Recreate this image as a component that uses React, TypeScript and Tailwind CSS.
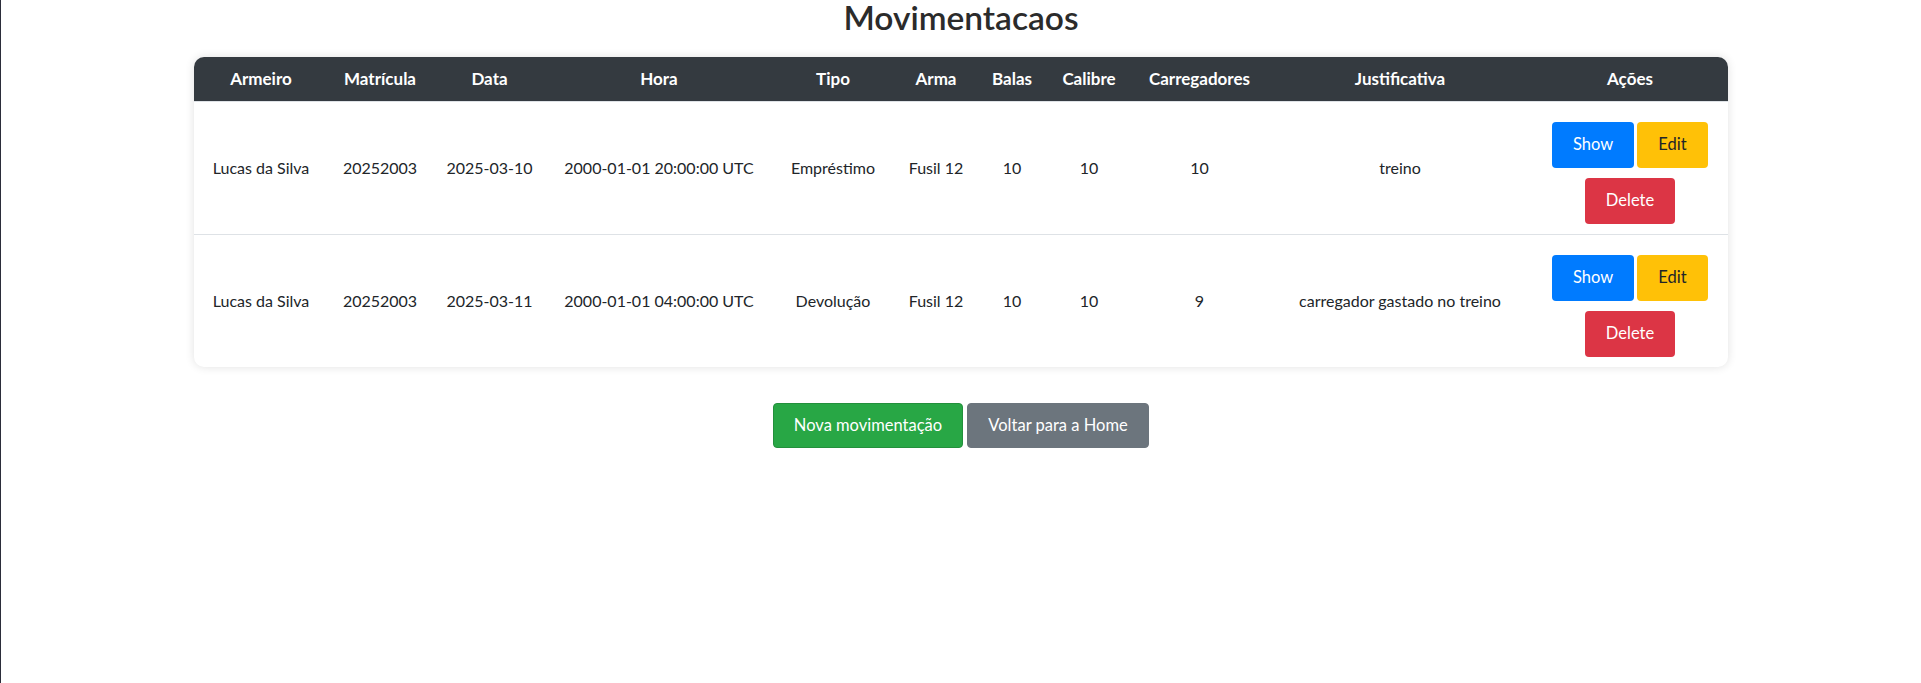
import React from "react";

type Row = {
  armeiro: string;
  matricula: string;
  data: string;
  hora: string;
  tipo: string;
  arma: string;
  balas: string;
  calibre: string;
  carregadores: string;
  justificativa: string;
};

const rows: Row[] = [
  {
    armeiro: "Lucas da Silva",
    matricula: "20252003",
    data: "2025-03-10",
    hora: "2000-01-01 20:00:00 UTC",
    tipo: "Empréstimo",
    arma: "Fusil 12",
    balas: "10",
    calibre: "10",
    carregadores: "10",
    justificativa: "treino",
  },
  {
    armeiro: "Lucas da Silva",
    matricula: "20252003",
    data: "2025-03-11",
    hora: "2000-01-01 04:00:00 UTC",
    tipo: "Devolução",
    arma: "Fusil 12",
    balas: "10",
    calibre: "10",
    carregadores: "9",
    justificativa: "carregador gastado no treino",
  },
];

const headers = [
  "Armeiro",
  "Matrícula",
  "Data",
  "Hora",
  "Tipo",
  "Arma",
  "Balas",
  "Calibre",
  "Carregadores",
  "Justificativa",
  "Ações",
];

const widths = [134, 104, 115, 224, 124, 82, 70, 84, 137, 264, 196];

export default function App() {
  return (
    <div className="min-h-[683px] bg-white border-l border-[#2b2d3a] font-['Lato',sans-serif] text-[#212529]">
      <h2 className="text-center text-[33.5px] font-semibold leading-[34px] m-0 text-[#2b2b2b]">Movimentacaos</h2>

      <div className="mx-auto mt-[23px] w-[1534px] rounded-[10px] overflow-hidden shadow-[0_0_10px_rgba(0,0,0,0.12)] bg-white">
        <table className="w-full table-fixed border-collapse text-[16px]">
          <colgroup>
            {widths.map((w, i) => (
              <col key={i} style={{ width: w }} />
            ))}
          </colgroup>
          <thead>
            <tr className="h-[44px] bg-[#343a40] text-white">
              {headers.map((h) => (
                <th key={h} className="text-center align-middle font-bold text-[17px] p-0">
                  {h}
                </th>
              ))}
            </tr>
          </thead>
          <tbody>
            {rows.map((r, i) => (
              <tr key={i} className="border-t border-[#dee2e6]">
                <td className="text-center align-middle p-0">{r.armeiro}</td>
                <td className="text-center align-middle p-0">{r.matricula}</td>
                <td className="text-center align-middle p-0">{r.data}</td>
                <td className="text-center align-middle p-0">{r.hora}</td>
                <td className="text-center align-middle p-0">{r.tipo}</td>
                <td className="text-center align-middle p-0">{r.arma}</td>
                <td className="text-center align-middle p-0">{r.balas}</td>
                <td className="text-center align-middle p-0">{r.calibre}</td>
                <td className="text-center align-middle p-0">{r.carregadores}</td>
                <td className="text-center align-middle p-0">{r.justificativa}</td>
                <td className="align-top pt-[20px] pb-0 px-0">
                  <div className="flex flex-col items-center">
                    <div className="flex gap-[3px] mb-[10px]">
                      <button className="w-[82px] h-[46px] rounded-[4px] bg-[#007bff] text-white text-[16.5px]">
                        Show
                      </button>
                      <button className="w-[71px] h-[46px] rounded-[4px] bg-[#ffc107] text-[#212529] text-[16.5px]">
                        Edit
                      </button>
                    </div>
                    <button className="w-[90px] h-[46px] mb-[10px] rounded-[4px] bg-[#dc3545] text-white text-[16.5px]">
                      Delete
                    </button>
                  </div>
                </td>
              </tr>
            ))}
          </tbody>
        </table>
      </div>

      <div className="flex justify-center gap-[4px] mt-[36px]">
        <button className="w-[190px] h-[45px] rounded-[4px] bg-[#28a745] border border-[#23903c] text-white text-[16.5px]">
          Nova movimentação
        </button>
        <button className="w-[182px] h-[45px] rounded-[4px] bg-[#6c757d] border border-[#6c757d] text-white text-[16.5px]">
          Voltar para a Home
        </button>
      </div>
    </div>
  );
}
